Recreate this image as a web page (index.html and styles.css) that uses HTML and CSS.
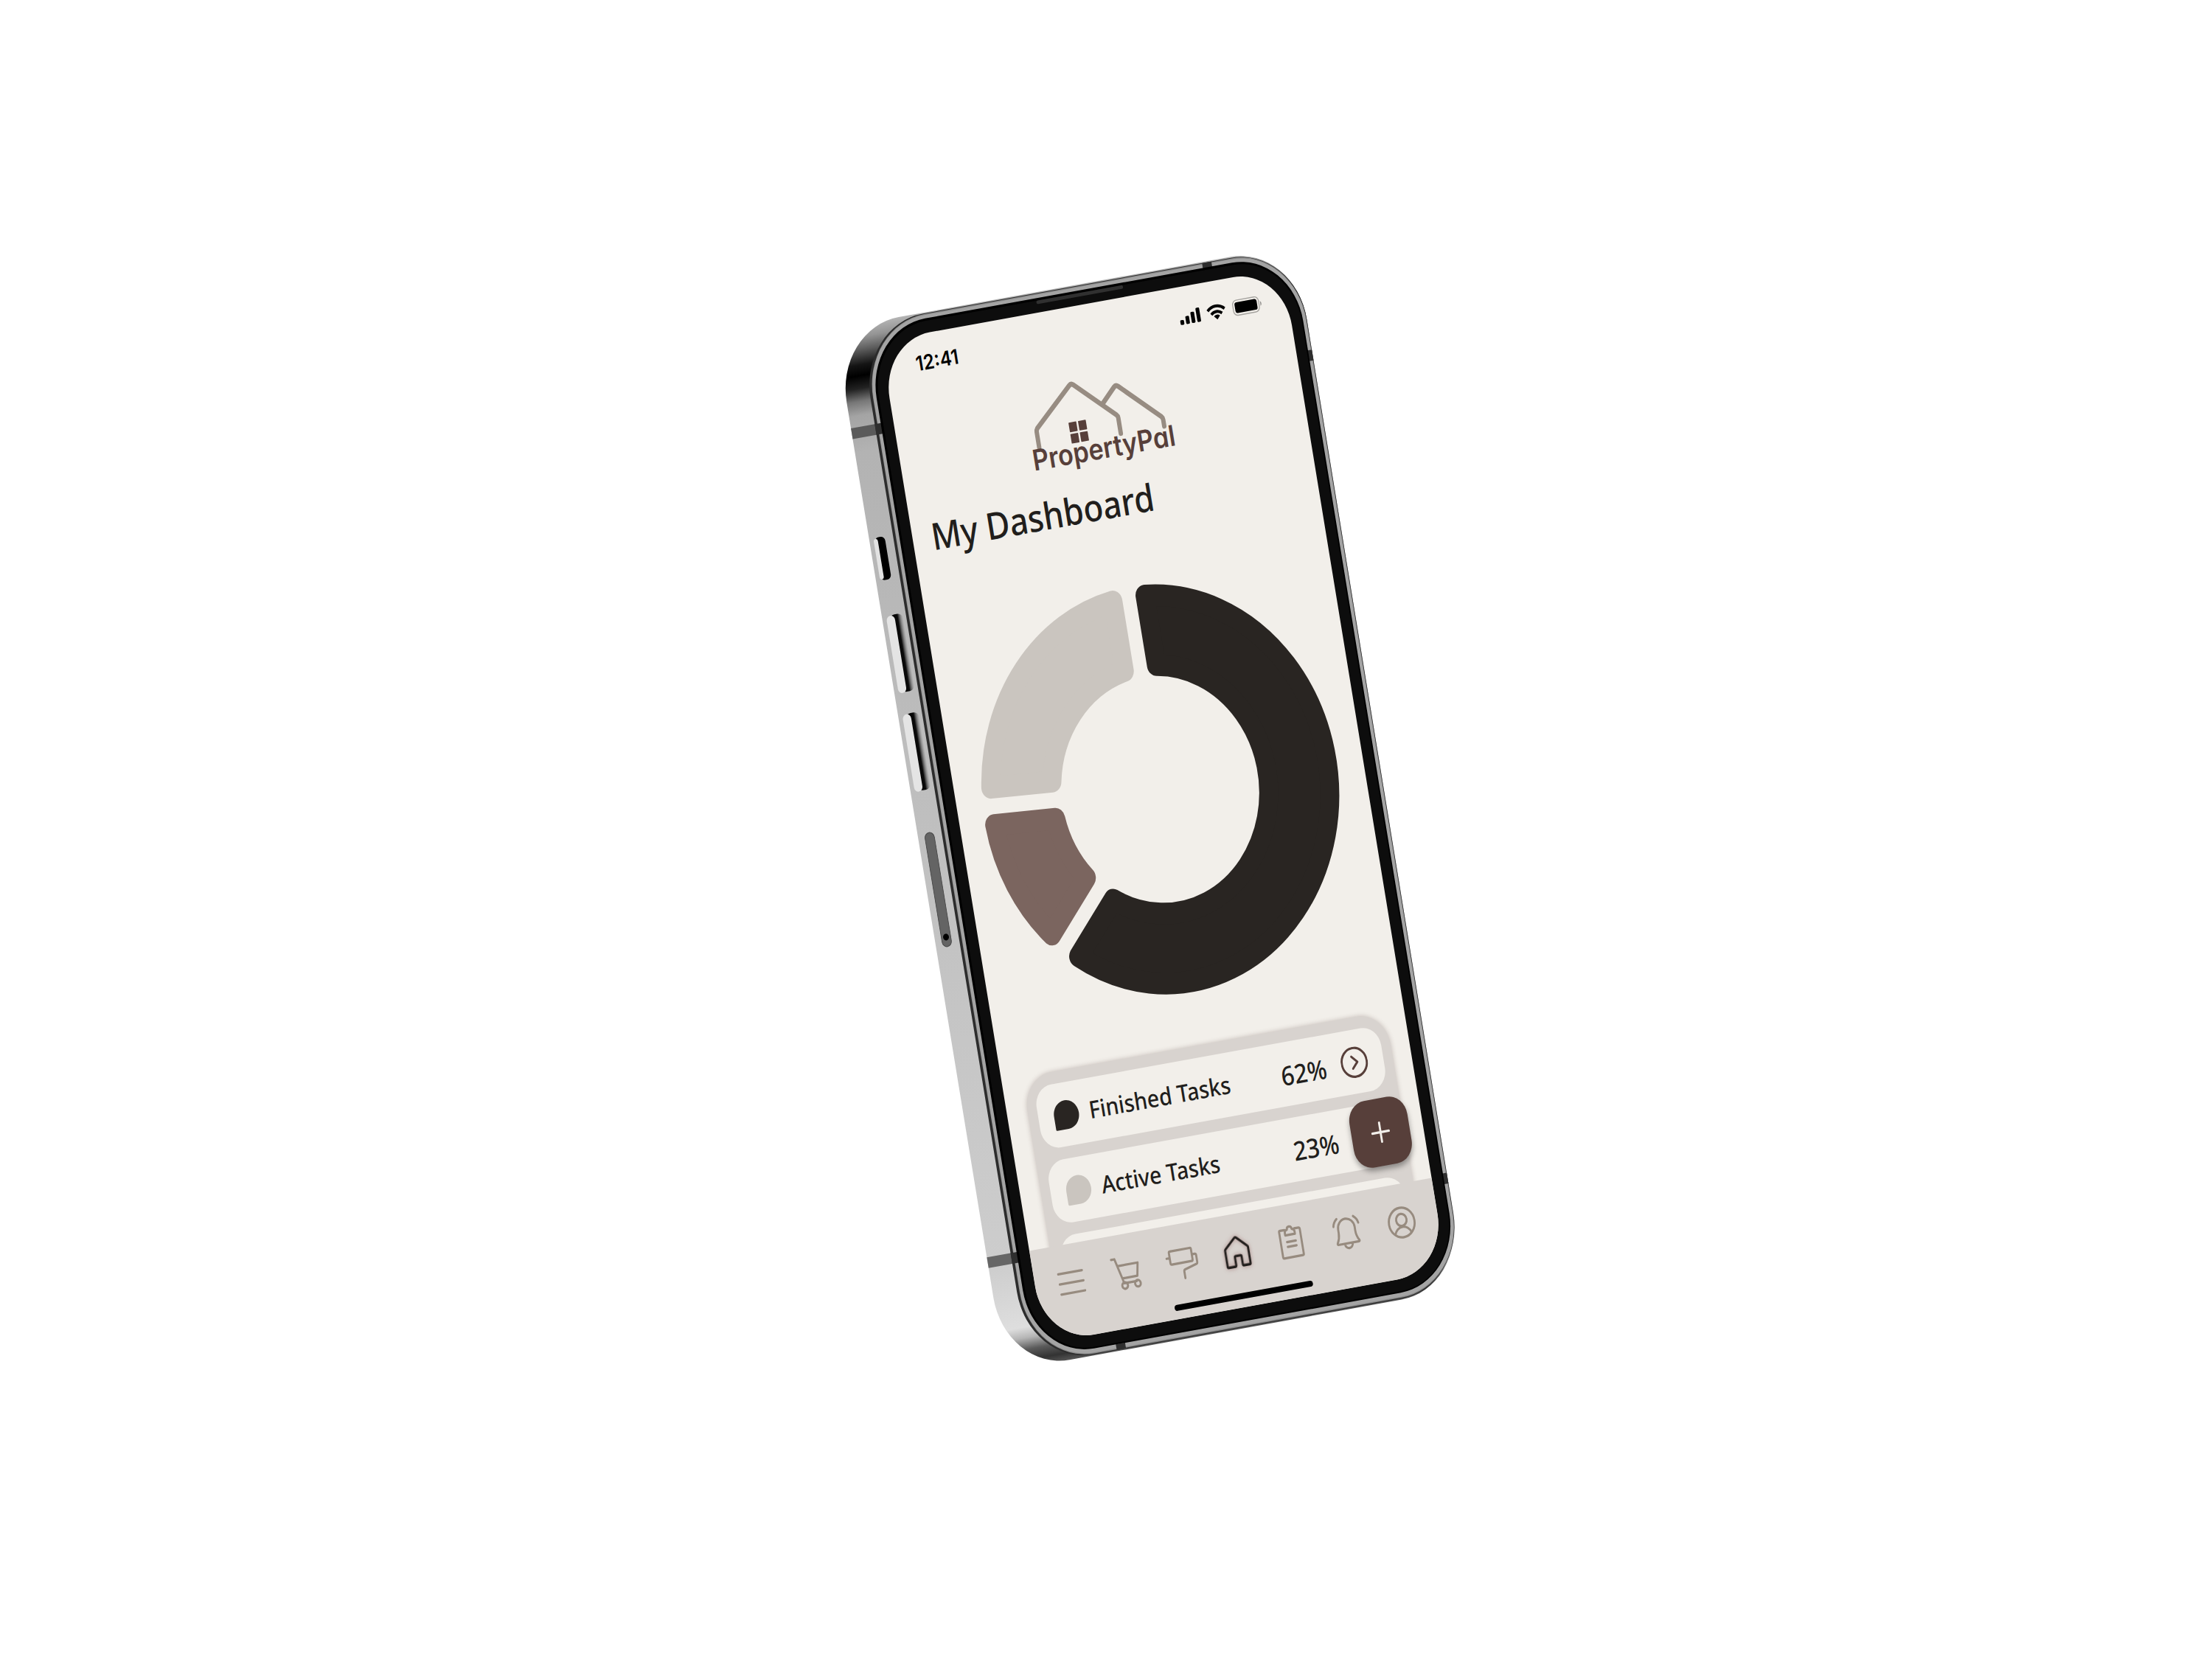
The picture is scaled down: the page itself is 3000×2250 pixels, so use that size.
FILE: index.html
```html
<!DOCTYPE html>
<html lang="en">
<head>
<meta charset="utf-8">
<meta name="viewport" content="width=device-width, initial-scale=1">
<title>PropertyPal – My Dashboard</title>
<link rel="stylesheet" href="styles.css">
</head>
<body>
<main class="stage">
  <div class="phone">
    <svg class="frame" viewBox="-45 -20 455 884" aria-hidden="true">
      <defs>
        <linearGradient id="side" gradientUnits="userSpaceOnUse" x1="0" y1="-17" x2="0" y2="861">
          <stop offset="0" stop-color="#b4b4b4"/>
          <stop offset=".012" stop-color="#949494"/>
          <stop offset=".024" stop-color="#5c5c5c"/>
          <stop offset=".038" stop-color="#141414"/>
          <stop offset=".048" stop-color="#000"/>
          <stop offset=".06" stop-color="#222"/>
          <stop offset=".072" stop-color="#777"/>
          <stop offset=".085" stop-color="#a4a4a4"/>
          <stop offset=".12" stop-color="#b3b3b3"/>
          <stop offset=".5" stop-color="#c0c0c0"/>
          <stop offset=".9" stop-color="#cdcdcd"/>
          <stop offset=".962" stop-color="#dedede"/>
          <stop offset=".972" stop-color="#b5b5b5"/>
          <stop offset=".983" stop-color="#5a5a5a"/>
          <stop offset=".993" stop-color="#333"/>
          <stop offset="1" stop-color="#555"/>
        </linearGradient>
        <linearGradient id="press" x1="0" x2="1" y1="0" y2="0">
          <stop offset="0" stop-color="#000"/>
          <stop offset=".6" stop-color="#0a0a0a"/>
          <stop offset="1" stop-color="#777" stop-opacity="0"/>
        </linearGradient>
      </defs>
      <rect x="-41" y="-17" width="446" height="878" rx="62" fill="url(#side)"/>
      <rect x="-41" y="67" width="40" height="9" fill="#5a5a5a"/>
      <rect x="-41" y="765" width="40" height="9" fill="#666"/>

      <rect x="-18" y="-16.200" width="423" height="876.200" rx="62" fill="#2c2c2c"/>
      <rect x="-15.500" y="-15.600" width="420" height="875" rx="61" fill="#8c8c8c"/>
      <rect x="-15" y="-14.800" width="419" height="873.300" rx="60" fill="#a4a4a4"/>
      <g fill="#2e2e2e">
        <rect x="315" y="-16" width="9" height="5"/>
        <rect x="67" y="855" width="9" height="5"/>
        <rect x="400" y="71" width="5" height="9"/>
        <rect x="400" y="764" width="5" height="9"/>
        <rect x="-18" y="67" width="7" height="9"/>
        <rect x="-18" y="765" width="7" height="9"/>
      </g>
      <rect x="-12.200" y="-12" width="413.500" height="867.300" rx="58" fill="#000"/>
      <rect x="-10" y="-10" width="410" height="864" rx="56" fill="#0d0d0d"/>
      <rect x="153" y="-10" width="84" height="3" rx="1.5" fill="#303030"/>

      <rect x="-36" y="160" width="10" height="36" rx="4" fill="#000"/>
      <rect x="-37" y="161" width="4" height="34" rx="2" fill="#e2e2e2"/>
      <rect x="-34" y="225.500" width="13" height="65" rx="5" fill="url(#press)"/>
      <rect x="-37" y="226" width="8" height="65" rx="4" fill="#e4e4e4"/>
      <rect x="-34" y="308.500" width="13" height="65" rx="5" fill="url(#press)"/>
      <rect x="-37" y="309" width="8" height="65" rx="4" fill="#e4e4e4"/>
      <rect x="-34.500" y="409" width="9" height="96" rx="4.5" fill="#646464" stroke="#444" stroke-width=".6"/>
      <circle cx="-30" cy="497" r="2.8" fill="#000"/>
    </svg>

    <div class="screen">
      <header class="status">
        <time class="clock">12:41</time>
        <svg class="status-icons" viewBox="285 19 80 13" aria-hidden="true">
          <rect x="285.500" y="27.500" width="3.600" height="4" rx="1"/>
          <rect x="290.900" y="24.800" width="3.600" height="6.700" rx="1"/>
          <rect x="296.300" y="22.200" width="3.600" height="9.300" rx="1"/>
          <rect x="301.700" y="19.600" width="3.600" height="11.900" rx="1"/>
          <g fill="none" stroke="#000" stroke-width="2.500">
            <path d="M312.800 24.200a12 12 0 0 1 16.400 0"/>
            <path d="M315.800 27.600a7.600 7.600 0 0 1 10.400 0"/>
          </g>
          <path d="M321 32.200l-2.900-2.900a4.200 4.200 0 0 1 5.800 0z"/>
          <rect x="337.300" y="19.200" width="25" height="12.600" rx="3.800" fill="none" stroke="#a5a39f" stroke-width=".9"/>
          <rect x="339.100" y="21" width="21.400" height="9" rx="2"/>
          <path d="M363.600 23.600v3.800c1.400-.5 1.400-3.300 0-3.800z" fill="#8f8d8a"/>
        </svg>
      </header>

      <section class="content">
        <div class="brand">
          <svg class="brand-mark" viewBox="130 60 130 54" aria-hidden="true">
            <g fill="none" stroke="#978c82" stroke-width="4.200" stroke-linecap="round" stroke-linejoin="round">
              <path d="M133.300 110.400V97.400q0-1.600 1.100-2.800L171 64.300q2-1.700 4 0L211 95.200q1.300 1.200 1.300 2.800V111"/>
              <path d="M199.200 84.600L213 72.200q2-1.800 4 0l36 31q1.300 1.200 1.300 3v5.400" />
            </g>
            <g fill="#573f3a">
              <rect x="164.600" y="94.600" width="7.500" height="8" rx=".5"/>
              <rect x="173.800" y="94.600" width="7.500" height="8" rx=".5"/>
              <rect x="164.600" y="104.200" width="7.500" height="8" rx=".5"/>
              <rect x="173.800" y="104.200" width="7.500" height="8" rx=".5"/>
            </g>
          </svg>
          <span class="brand-name">PropertyPal</span>
        </div>

        <h1 class="title">My Dashboard</h1>

        <svg class="chart" viewBox="-169 -170.500 339 339" role="img" aria-label="Task breakdown">
          <g stroke-width="18" stroke-linejoin="round">
            <path fill="#292522" stroke="#292522" d="M15.500-160.250A161 161 0 1 1-102.350 124.270L-61.040 82.960A103 103 0 1 0 15.500-101.830Z"/>
            <path fill="#7b655f" stroke="#7b655f" d="M-124.270 102.350A161 161 0 0 1-160.930 4.560L-102.640 8.540A103 103 0 0 0-82.960 61.040Z"/>
            <path fill="#cac5bf" stroke="#cac5bf" d="M-158.830-26.360A161 161 0 0 1-15.500-160.250V-101.830A103 103 0 0 0-100.540-22.380Z"/>
          </g>
        </svg>

        <ul class="tasks">
          <li class="task">
            <span class="drop drop-dark"></span>
            <span class="task-name">Finished Tasks</span>
            <span class="task-value">62%</span>
            <button class="go" type="button" aria-label="Open finished tasks">
              <svg viewBox="0 0 26 26"><circle cx="13" cy="13" r="12"/><path d="M11 8l5 5-5 5"/></svg>
            </button>
          </li>
          <li class="task">
            <span class="drop drop-light"></span>
            <span class="task-name">Active Tasks</span>
            <span class="task-value">23%</span>
            <button class="go" type="button" aria-label="Open active tasks">
              <svg viewBox="0 0 26 26"><circle cx="13" cy="13" r="12"/><path d="M11 8l5 5-5 5"/></svg>
            </button>
          </li>
          <li class="task"></li>
        </ul>
      </section>

      <button class="fab" type="button" aria-label="Add task">
        <svg viewBox="0 0 18 18"><path d="M9 1v16M1 9h16"/></svg>
      </button>

      <nav class="tabs" aria-label="Main">
        <a class="tab" href="#menu" aria-label="Menu"><svg viewBox="0 0 30 30"><path d="M3.500 6.500h23M3.500 15h23M3.500 23.500h23"/></svg></a>
        <a class="tab" href="#shop" aria-label="Shop"><svg viewBox="0 0 30 30"><path d="M2.500 2.500h3.200L11.500 23.500M7.300 8.500h19.800l-2.200 10.800H10.300M11.500 23.500h12"/><circle cx="11.900" cy="25.500" r="2.700"/><circle cx="24.300" cy="25.500" r="2.700"/></svg></a>
        <a class="tab" href="#paint" aria-label="Paint"><svg viewBox="0 0 30 30"><path d="M4 5.500q0-1.200 1.200-1.200h19q1.200 0 1.200 1.200v8.600q0 1.200-1.200 1.200h-19q-1.200 0-1.200-1.200zM1 9.800h3M25.400 9.800h2.800q1.200 0 1.200 1.200v6q0 1-1 1.300L17 21.200q-1.200.3-1.200 1.500v5.600"/></svg></a>
        <a class="tab tab-active" href="#home" aria-label="Home" aria-current="page"><svg viewBox="0 0 30 30"><path d="M4.300 12.200q0-.8.500-1.200L14.800 2.800q.9-.7 1.800 0L26 11q.5.400.5 1.200V25.600q0 .9-.9.900h-5.700q-.9 0-.9-.9V18.800q0-.9-.9-.9h-4.600q-.9 0-.9.900v6.800q0 .9-.9.900H5.200q-.9 0-.9-.9z"/></svg></a>
        <a class="tab" href="#tasks" aria-label="Tasks"><svg viewBox="0 0 30 30"><path d="M10.300 3.800H6q-1 0-1 1V26q0 1 1 1h18q1 0 1-1V4.800q0-1-1-1h-4.300M10.300 8.300V6.200q0-2 2.400-2.400 0-2.300 2.300-2.300t2.300 2.300q2.400.4 2.400 2.400v2.100zM11 14h8.500M11 18h8.500"/></svg></a>
        <a class="tab" href="#alerts" aria-label="Alerts"><svg viewBox="0 0 30 30"><path d="M5 24q-.9-.3-.5-1.200Q7 19 7 14.500V11.500a8 8 0 0 1 16 0V14.500q0 4.500 2.500 8.300.4.900-.5 1.200zM11.300 24.400a3.700 3.700 0 0 0 7.400 0M3 8.500q.6-3.500 4-6M27 8.500q-.6-3.500-4-6"/></svg></a>
        <a class="tab" href="#profile" aria-label="Profile"><svg viewBox="0 0 30 30"><circle cx="15" cy="15" r="12.300"/><circle cx="15" cy="12.800" r="5"/><path d="M7.200 24.300a8.200 8.200 0 0 1 15.600 0"/></svg></a>
        <span class="home-bar"></span>
      </nav>
    </div>
  </div>
</main>
</body>
</html>
```
FILE: styles.css
```css
* {
  box-sizing: border-box;
}

body {
  margin: 0;
  background: #fff;
  color: #211e1c;
  font-family: "Noto Sans", "Open Sans", sans-serif;
}

.stage {
  display: flex;
  align-items: center;
  justify-content: center;
  min-height: 100vh;
  overflow: hidden;
}

/* The device is drawn flat and tilted as one piece. */
.phone {
  position: relative;
  flex: none;
  width: 390px;
  height: 844px;
  transform: translate(78px, -32px) matrix(1.399, -0.2538, 0.264, 1.6107, 0, 0);
}

.frame {
  position: absolute;
  left: -45px;
  top: -20px;
  width: 455px;
  height: 884px;
}

.screen {
  position: relative;
  display: flex;
  flex-direction: column;
  height: 100%;
  overflow: hidden;
  border-radius: 48px;
  background: #f2efea;
}

.status {
  display: flex;
  flex: none;
  justify-content: space-between;
  height: 48px;
  padding: 12px 25px 0 30px;
}

.clock {
  color: #000;
  font: 600 17px/24px "Inter", sans-serif;
}

.status-icons {
  width: 80px;
  height: 13px;
  margin-top: 7px;
  overflow: visible;
}

.content {
  display: flex;
  flex: 1;
  flex-direction: column;
  min-height: 0;
  padding: 12px 20px 0;
}

.brand {
  display: flex;
  flex: none;
  flex-direction: column;
  align-items: center;
}

.brand-mark {
  width: 130px;
  height: 54px;
  margin-bottom: -5px;
  overflow: visible;
}

.brand-name {
  margin-right: 2px;
  color: #573f3a;
  font: 600 24px/24px "Inter", sans-serif;
  font-feature-settings: "cv11";
}

.title {
  flex: none;
  margin: 12px 0 0 -2px;
  font-size: 31px;
  font-weight: 500;
  line-height: 44px;
}

.chart {
  flex: none;
  align-self: center;
  width: 340px;
  height: 340px;
  margin-top: 48px;
  overflow: visible;
}

.tasks {
  display: flex;
  flex: none;
  flex-direction: column;
  gap: 10px;
  margin: 46px -2px 0 0;
  padding: 10px 9px;
  border-radius: 28px;
  background: #d8d3cf;
  box-shadow: 0 0 4px rgba(87, 63, 58, 0.3);
  list-style: none;
}

.task {
  display: flex;
  align-items: center;
  height: 53px;
  padding: 0 15px;
  border-radius: 17px;
  background: #f2efea;
}

.drop {
  width: 24px;
  height: 24px;
  margin-right: 10px;
  border-radius: 12px 12px 12px 1px;
}

.drop-dark {
  background: #292522;
}

.drop-light {
  background: #cac5bf;
}

.task-name {
  flex: 1;
  font-size: 20px;
  font-weight: 500;
}

.task-value {
  margin-right: 14px;
  font-size: 22px;
  font-weight: 500;
  line-height: 28px;
}

.go {
  width: 26px;
  height: 26px;
  padding: 0;
  border: 0;
  background: none;
}

.go svg {
  display: block;
  fill: none;
  stroke: #573f3a;
  stroke-width: 2;
  stroke-linecap: round;
  stroke-linejoin: round;
}

.fab {
  position: absolute;
  right: 13px;
  bottom: 95px;
  display: grid;
  place-items: center;
  width: 56px;
  height: 56px;
  padding: 0;
  border: 0;
  border-radius: 17px;
  background: #573f3a;
  box-shadow: 0 3px 5px rgba(0, 0, 0, 0.35);
}

.fab svg {
  width: 18px;
  height: 18px;
  fill: none;
  stroke: #f2efea;
  stroke-width: 2;
  stroke-linecap: round;
}

.tabs {
  position: relative;
  display: flex;
  flex: none;
  height: 78px;
  padding: 17px 8px 0;
  background: #d8d3cf;
}

.tab {
  display: flex;
  flex: 1;
  justify-content: center;
  height: 30px;
}

.tab svg {
  width: 30px;
  height: 30px;
  overflow: visible;
  fill: none;
  stroke: #978b7f;
  stroke-width: 2;
  stroke-linecap: round;
  stroke-linejoin: round;
}

.tab-active svg {
  stroke: #211e1c;
  filter: drop-shadow(0 0 2px rgba(120, 50, 50, 0.5));
}

.home-bar {
  position: absolute;
  left: 50%;
  bottom: 7px;
  width: 134px;
  height: 5px;
  margin-left: -67px;
  border-radius: 3px;
  background: #000;
}
```
